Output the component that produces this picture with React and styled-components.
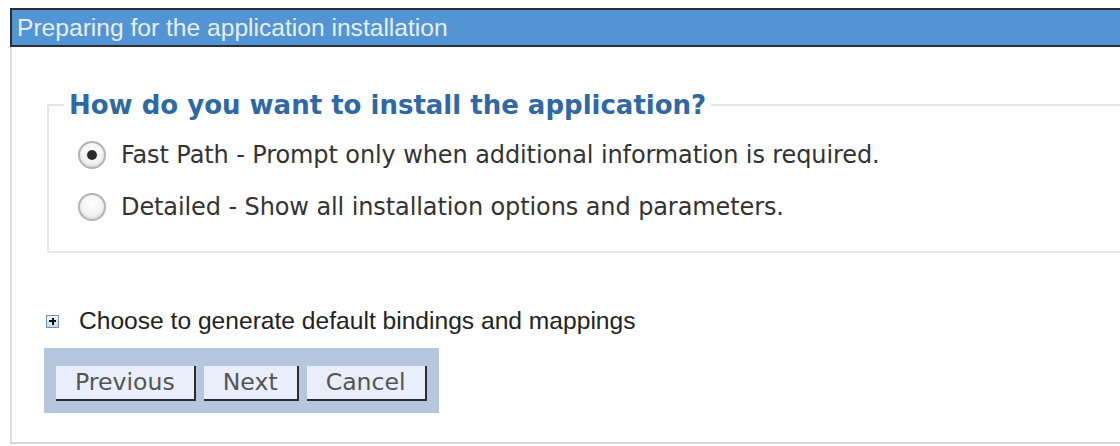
import styled, { createGlobalStyle } from "styled-components";

const GlobalStyle = createGlobalStyle`
  html, body {
    margin: 0;
    padding: 0;
    background: #ffffff;
  }
  body {
    font-family: "DejaVu Sans", sans-serif;
  }
`;

const Page = styled.div`
  width: 1120px;
  height: 446px;
  padding: 8px 0 0 10px;
  box-sizing: border-box;
  overflow: hidden;
`;

const Panel = styled.div`
  border-left: 2px solid #dcdcdc;
  border-bottom: 2px solid #d6d6d6;
  height: 436px;
  box-sizing: border-box;
  display: flex;
  flex-direction: column;
`;

const TitleBar = styled.div`
  background: #5294d4;
  border-top: 2px solid #2a2f36;
  border-bottom: 2px solid #2a2f36;
  border-left: 2px solid #2a2f36;
  margin-left: -2px;
  height: 39px;
  box-sizing: border-box;
  padding-left: 5px;
  display: flex;
  align-items: center;
  font-family: "Liberation Sans", Arial, sans-serif;
  font-size: 24.6px;
  color: #e8f0fa;
  white-space: nowrap;
`;

const Body = styled.div`
  padding: 43px 0 0 32px;
  display: flex;
  flex-direction: column;
`;

const Group = styled.fieldset`
  margin: 0 0 0 3px;
  border: 2px solid #e6e6e6;
  border-right: none;
  padding: 9px 0 18px 29px;
  min-width: 0;
`;

const Legend = styled.legend`
  padding: 0 5px;
  margin-left: -14px;
  line-height: 30px;
  font-family: "DejaVu Sans", sans-serif;
  font-weight: bold;
  font-size: 26px;
  color: #2f68a3;
  white-space: nowrap;
`;

const Option = styled.label`
  display: flex;
  align-items: center;
  gap: 15px;
  height: 52px;
  font-family: "DejaVu Sans", sans-serif;
  font-size: 24px;
  letter-spacing: -0.1px;
  color: #333333;
  white-space: nowrap;
`;

const Radio = styled.span`
  width: 28px;
  height: 28px;
  border-radius: 50%;
  box-sizing: border-box;
  border: 2px solid #b4b4b4;
  background: radial-gradient(circle at 50% 35%, #ffffff 0%, #f3f3f3 55%, #dcdcdc 100%);
  box-shadow: inset 0 -1px 2px rgba(0, 0, 0, 0.08);
  display: flex;
  align-items: center;
  justify-content: center;
  flex: none;

  &::after {
    content: "";
    width: 10px;
    height: 10px;
    border-radius: 50%;
    background: ${(p) => (p.$checked ? "#2b2b2b" : "transparent")};
  }
`;

const Expander = styled.div`
  display: flex;
  align-items: center;
  gap: 20px;
  height: 28px;
  margin-top: 54px;
  margin-left: 2px;
  font-family: "Liberation Sans", Arial, sans-serif;
  font-size: 24.6px;
  color: #222222;
  white-space: nowrap;
`;

const PlusBox = styled.span`
  width: 13px;
  height: 13px;
  box-sizing: border-box;
  border: 1px solid #6f90b8;
  background: linear-gradient(#f6f9fc, #cdd9e8);
  position: relative;
  flex: none;

  &::before,
  &::after {
    content: "";
    position: absolute;
    background: #111111;
  }
  &::before {
    left: 2px;
    top: 4.5px;
    width: 7px;
    height: 2px;
  }
  &::after {
    left: 4.5px;
    top: 2px;
    width: 2px;
    height: 7px;
  }
`;

const ButtonBar = styled.div`
  align-self: flex-start;
  margin-top: 13px;
  background: #b5c6df;
  padding: 18px 12px 12px 12px;
  display: flex;
  gap: 8px;
`;

const Button = styled.button`
  height: 35px;
  padding: 0 ${(p) => p.$pad}px;
  box-sizing: border-box;
  background: #e9effa;
  border: none;
  border-right: 2px solid #2a2a2a;
  border-bottom: 2px solid #2a2a2a;
  border-radius: 0;
  font-family: "DejaVu Sans", sans-serif;
  font-size: 23.6px;
  line-height: 1;
  color: #555555;
  cursor: pointer;
`;

export default function App() {
  return (
    <>
      <GlobalStyle />
      <Page>
        <Panel>
          <TitleBar>Preparing for the application installation</TitleBar>
          <Body>
            <Group>
              <Legend>How do you want to install the application?</Legend>
              <Option>
                <Radio $checked />
                Fast Path - Prompt only when additional information is required.
              </Option>
              <Option>
                <Radio />
                Detailed - Show all installation options and parameters.
              </Option>
            </Group>
            <Expander>
              <PlusBox />
              Choose to generate default bindings and mappings
            </Expander>
            <ButtonBar>
              <Button $pad={19}>Previous</Button>
              <Button $pad={19}>Next</Button>
              <Button $pad={19}>Cancel</Button>
            </ButtonBar>
          </Body>
        </Panel>
      </Page>
    </>
  );
}
